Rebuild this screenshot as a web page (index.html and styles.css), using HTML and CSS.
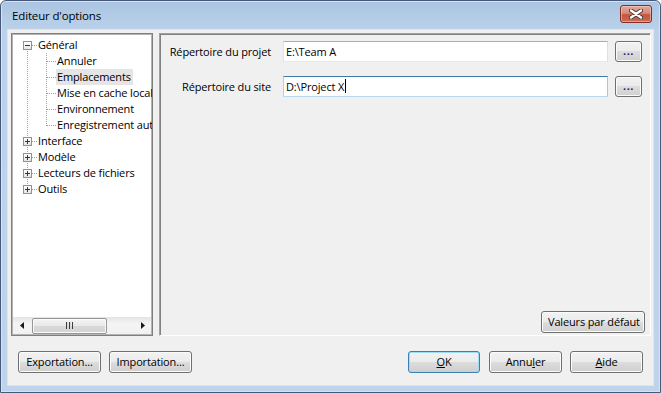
FILE: index.html
```html
<!DOCTYPE html>
<html lang="fr">
<head>
  <meta charset="UTF-8">
  <title>Editeur d'options</title>
  <link rel="stylesheet" href="styles.css">
</head>
<body>
  <div class="window">
    <div class="titlebar">
      <span class="title">Editeur d'options</span>
      <button class="close" title="Fermer">
        <svg width="14" height="10" viewBox="0 0 14 10">
          <path d="M2 1.5 L12 8.5 M12 1.5 L2 8.5" stroke="#3b3b3b" stroke-width="4.2" stroke-linecap="round"/>
          <path d="M2 1.5 L12 8.5 M12 1.5 L2 8.5" stroke="#ffffff" stroke-width="2.4" stroke-linecap="round"/>
        </svg>
      </button>
    </div>

    <div class="client">
      <div class="main">
        <div class="tree">
          <div class="tree-items">
            <div class="row"><span class="c root-first"><span class="box minus"></span></span><span class="label">Général</span></div>
            <div class="row"><span class="c pass"></span><span class="c child-mid"></span><span class="label">Annuler</span></div>
            <div class="row"><span class="c pass"></span><span class="c child-mid"></span><span class="label selected">Emplacements</span></div>
            <div class="row"><span class="c pass"></span><span class="c child-mid"></span><span class="label">Mise en cache locale</span></div>
            <div class="row"><span class="c pass"></span><span class="c child-mid"></span><span class="label">Environnement</span></div>
            <div class="row"><span class="c pass"></span><span class="c child-last"></span><span class="label">Enregistrement automatique</span></div>
            <div class="row"><span class="c root-mid"><span class="box plus"></span></span><span class="label">Interface</span></div>
            <div class="row"><span class="c root-mid"><span class="box plus"></span></span><span class="label">Modèle</span></div>
            <div class="row"><span class="c root-mid"><span class="box plus"></span></span><span class="label">Lecteurs de fichiers</span></div>
            <div class="row"><span class="c root-last"><span class="box plus"></span></span><span class="label">Outils</span></div>
          </div>
          <div class="hscroll">
            <span class="arrow">
              <svg width="4" height="7" viewBox="0 0 4 7"><path d="M4 0 L0 3.5 L4 7 Z" fill="#1a1a1a"/></svg>
            </span>
            <span class="track"><span class="thumb"><span class="grip"></span></span></span>
            <span class="arrow">
              <svg width="4" height="7" viewBox="0 0 4 7"><path d="M0 0 L4 3.5 L0 7 Z" fill="#1a1a1a"/></svg>
            </span>
          </div>
        </div>

        <div class="panel">
          <div class="field-row">
            <span class="field-label">Répertoire du projet</span>
            <div class="input">E:\Team A</div>
            <button class="btn browse">...</button>
          </div>
          <div class="field-row">
            <span class="field-label">Répertoire du site</span>
            <div class="input focused">D:\Project X<span class="caret"></span></div>
            <button class="btn browse">...</button>
          </div>
          <div class="panel-foot">
            <button class="btn defaults">Valeurs par défaut</button>
          </div>
        </div>
      </div>

      <div class="actions">
        <button class="btn wide">Exportation...</button>
        <button class="btn wide">Importation...</button>
        <span class="spacer"></span>
        <button class="btn dialog default"><u>O</u>K</button>
        <button class="btn dialog">Annu<u>l</u>er</button>
        <button class="btn dialog"><u>A</u>ide</button>
      </div>
    </div>
  </div>
</body>
</html>
```

FILE: styles.css
```css
:root {
  --vdot: repeating-linear-gradient(to bottom, #a0a0a0 0 1px, transparent 1px 2px);
  --hdot: repeating-linear-gradient(to right, #a0a0a0 0 1px, transparent 1px 2px);
}
* {
  box-sizing: border-box;
}
body {
  margin: 0;
  font-family: 'Open Sans', 'Noto Sans', sans-serif;
  font-size: 11px;
  letter-spacing: -0.15px;
  color: #000;
  background: #fff;
}
button {
  font: inherit;
  letter-spacing: inherit;
  color: inherit;
}
.window {
  width: 661px;
  height: 393px;
  display: flex;
  flex-direction: column;
  padding: 0 7px 7px;
  border: 1px solid #46597a;
  border-radius: 6px 6px 0 0;
  background: linear-gradient(to bottom, #a9c4e2 0, #bcd2ea 30px, #bed4eb 100%);
  box-shadow: inset 0 0 0 1px #d6e4f2;
}
.titlebar {
  height: 29px;
  display: flex;
  align-items: center;
  padding-left: 4px;
}
.title {
  flex: 1;
  font-size: 11.5px;
  padding-bottom: 1px;
}
.close {
  width: 32px;
  height: 18px;
  margin-right: 1px;
  margin-top: -3px;
  padding: 0;
  display: flex;
  align-items: center;
  justify-content: center;
  border: 1px solid #7b2f28;
  border-radius: 3px;
  background: linear-gradient(to bottom, #e4a79a 0%, #d48a7a 45%, #c4553f 55%, #cd6a52 100%);
  box-shadow: inset 0 0 0 1px rgba(255, 220, 210, 0.5);
}
.client {
  flex: 1;
  display: flex;
  flex-direction: column;
  background: #f0f0f0;
  padding: 3px 2px 12px 3px;
  box-shadow: 0 0 0 1px #dae6f3;
}
.main {
  flex: 1;
  display: flex;
  gap: 6px;
}

/* tree */
.tree {
  width: 143px;
  display: flex;
  flex-direction: column;
  background: #fff;
  border: 1px solid #7f7f7f;
  box-shadow: inset 0 0 0 1px #b4b4b4;
  padding: 1px;
  overflow: hidden;
}
.tree-items {
  flex: 1;
  padding: 2px 0 0 5px;
  white-space: nowrap;
}
.row {
  height: 16px;
  display: flex;
  align-items: center;
}
.c {
  width: 19px;
  height: 16px;
  flex: none;
  display: flex;
  align-items: center;
  justify-content: center;
}
.pass {
  background: var(--vdot) 9px 0 / 1px 16px no-repeat;
}
.child-mid {
  background: var(--hdot) 10px 8px / 9px 1px no-repeat, var(--vdot) 9px 0 / 1px 16px no-repeat;
}
.child-last {
  background: var(--hdot) 10px 8px / 9px 1px no-repeat, var(--vdot) 9px 0 / 1px 9px no-repeat;
}
.root-first {
  background: var(--hdot) 10px 8px / 9px 1px no-repeat, var(--vdot) 9px 8px / 1px 8px no-repeat;
}
.root-mid {
  background: var(--hdot) 10px 8px / 9px 1px no-repeat, var(--vdot) 9px 0 / 1px 16px no-repeat;
}
.root-last {
  background: var(--hdot) 10px 8px / 9px 1px no-repeat, var(--vdot) 9px 0 / 1px 9px no-repeat;
}
.box {
  width: 9px;
  height: 9px;
  border: 1px solid #919191;
  background: linear-gradient(#fff, #e6e6e6);
  margin-top: 1px;
}
.minus {
  background: linear-gradient(#1e395b, #1e395b) center / 5px 1px no-repeat, linear-gradient(#fff, #e6e6e6);
}
.plus {
  background: linear-gradient(#1e395b, #1e395b) center / 5px 1px no-repeat,
              linear-gradient(#1e395b, #1e395b) center / 1px 5px no-repeat,
              linear-gradient(#fff, #e6e6e6);
}
.label {
  padding: 0 2px 1px 1px;
  line-height: 15px;
}
.selected {
  background: #e5e5e5;
}
.hscroll {
  height: 17px;
  display: flex;
  background: linear-gradient(to bottom, #e4e4e4, #f4f4f4 40%, #f1f1f1);
}
.arrow {
  width: 17px;
  display: flex;
  align-items: center;
  justify-content: center;
}
.track {
  flex: 1;
  display: flex;
  align-items: center;
  padding-left: 2px;
}
.thumb {
  width: 75px;
  height: 16px;
  display: flex;
  align-items: center;
  justify-content: center;
  border: 1px solid #979797;
  border-radius: 2px;
  background: linear-gradient(to bottom, #f5f5f5, #e8e8e8 50%, #d9d9d9 51%, #d4d4d4);
  box-shadow: inset 0 0 0 1px #fafafa;
}
.grip {
  width: 7px;
  height: 7px;
  background: repeating-linear-gradient(to right, #3c3c3c 0 1px, #d8d8d8 1px 2px, transparent 2px 3px);
}

/* right panel */
.panel {
  flex: 1;
  display: flex;
  flex-direction: column;
  gap: 14px;
  padding: 7px 8px 2px 0;
  border: 1px solid;
  border-color: #a0a0a0 #fff #fff #a0a0a0;
  box-shadow: inset 1px 1px 0 #828282;
}
.field-row {
  display: flex;
  align-items: center;
  height: 21px;
}
.field-label {
  width: 111px;
  text-align: right;
  margin-right: 12px;
}
.input {
  width: 325px;
  height: 21px;
  display: flex;
  align-items: center;
  padding: 0 2px 1px;
  background: #fff;
  border: 1px solid;
  border-color: #abadb3 #dbdfe6 #e3e9ef #e2e3ea;
}
.input.focused {
  border-color: #3d7bad #a4c9e3 #b7d9ed #b5cfe7;
}
.caret {
  width: 1px;
  height: 14px;
  margin-left: 1px;
  background: #000;
}

/* buttons */
.btn {
  height: 22px;
  padding: 0 6px 1px;
  border: 1px solid #707070;
  border-radius: 3px;
  background: linear-gradient(to bottom, #f2f2f2 0%, #ebebeb 49%, #dddddd 50%, #cfcfcf 100%);
  box-shadow: inset 0 0 0 1px #fbfbfb;
  white-space: nowrap;
}
.browse {
  width: 27px;
  height: 21px;
  margin-left: 7px;
  padding: 0 0 2px;
  color: #1e1e6e;
  font-weight: bold;
  letter-spacing: 0.5px;
}
.panel-foot {
  margin-top: auto;
  display: flex;
  justify-content: flex-end;
  margin-right: -3px;
}
.defaults {
  width: 104px;
}
.actions {
  display: flex;
  align-items: center;
  gap: 8px;
  margin-top: 15px;
  padding: 0 8px 0 7px;
}
.wide {
  width: 83px;
}
.spacer {
  flex: 1;
}
.dialog {
  width: 73px;
}
.default {
  width: 72px;
  margin-right: 1px;
  border-color: #3c7fb1;
  box-shadow: inset 0 0 0 1px #9fdcf6;
}
```
